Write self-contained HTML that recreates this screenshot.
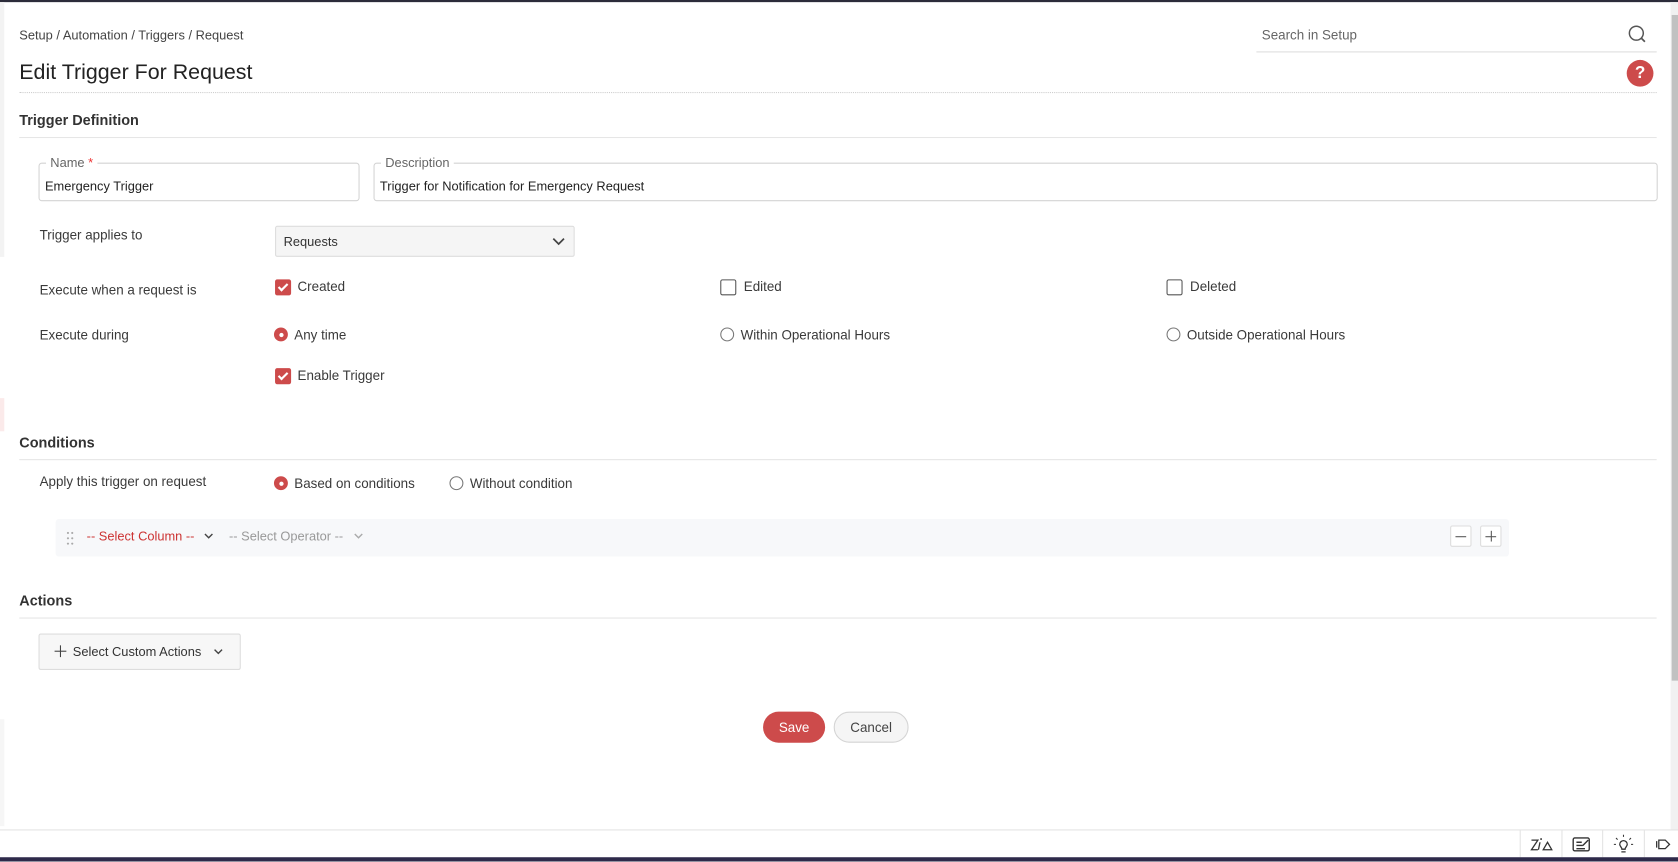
<!DOCTYPE html>
<html><head><meta charset="utf-8"><style>
html,body{margin:0;padding:0;width:1678px;height:861px;overflow:hidden;background:#fff;}
#w{position:absolute;left:0;top:0;width:1568px;height:805px;transform:scale(1.0702);transform-origin:0 0;font-family:"Liberation Sans",sans-serif;color:#3a3a3a;font-size:12.5px;}
.a{position:absolute;white-space:nowrap;}
.cb{position:absolute;width:13px;height:13px;border:1px solid #555;border-radius:2px;background:#fff;}
.cb.on{background:#cd4b4b;border-color:#cd4b4b;}
.cb.on:after{content:"";position:absolute;left:4px;top:1px;width:3px;height:7px;border:solid #fff;border-width:0 2px 2px 0;transform:rotate(45deg);}
.rd{position:absolute;width:11px;height:11px;border:1px solid #777;border-radius:50%;background:#fff;}
.rd.on{background:#cd4b4b;border-color:#cd4b4b;}
.rd.on:after{content:"";position:absolute;left:3.5px;top:3.5px;width:4px;height:4px;background:#fff;border-radius:50%;}
.hl{position:absolute;left:18px;width:1530px;height:1px;background:#e6e6e6;}
.fs{position:absolute;border:1px solid #d4d4d4;border-radius:3px;}
.lg{position:absolute;top:-8px;background:#fff;padding:0 4px;color:#666;font-size:12px;}
.sec{position:absolute;left:18px;font-weight:bold;font-size:13.5px;color:#333;}
</style></head><body><div id="w">
<div class="a" style="left:0;top:0;width:1568px;height:2px;background:#2c2c3a"></div>
<div class="a" style="left:0;top:2px;width:4px;height:238px;background:#f3f3f3"></div>
<div class="a" style="left:0;top:372px;width:4px;height:31px;background:#fbeaea"></div>
<div class="a" style="left:0;top:672px;width:4px;height:100px;background:#f6f6f6"></div>
<div class="a" style="left:1561px;top:2px;width:7px;height:774px;background:#f1f1f1"></div>
<div class="a" style="left:1562px;top:14px;width:6px;height:622px;background:#c1c1c1"></div>

<div class="a" style="left:18px;top:26px;font-size:12px;color:#444">Setup / Automation / Triggers / Request</div>
<div class="a" style="left:1179px;top:26px;font-size:12.5px;color:#666">Search in Setup</div>
<div class="a" style="left:1174px;top:48px;width:374px;height:1px;background:#ddd"></div>
<svg class="a" style="left:1520px;top:22px" width="20" height="20" viewBox="0 0 20 20"><circle cx="9" cy="9" r="6.5" fill="none" stroke="#555" stroke-width="1.4"/><path d="M13.5 13.5L17 17" stroke="#555" stroke-width="1.6"/></svg>
<div class="a" style="left:18px;top:57px;font-size:20px;color:#222">Edit Trigger For Request</div>
<div class="a" style="left:1520px;top:56px;width:25px;height:25px;border-radius:50%;background:#cd4b4b;color:#fff;font-weight:bold;font-size:16px;text-align:center;line-height:25px">?</div>
<div class="a" style="left:18px;top:86px;width:1530px;border-top:1px dotted #ccc"></div>

<div class="sec" style="top:105px">Trigger Definition</div>
<div class="hl" style="top:128px"></div>
<div class="fs" style="left:36px;top:152px;width:298px;height:34px"><span class="lg" style="left:6px">Name<span style="color:#e33"> *</span></span><span class="a" style="left:5px;top:14px;font-size:12px;color:#222">Emergency Trigger</span></div>
<div class="fs" style="left:349px;top:152px;width:1198px;height:34px"><span class="lg" style="left:6px">Description</span><span class="a" style="left:5px;top:14px;font-size:12px;color:#222">Trigger for Notification for Emergency Request</span></div>

<div class="a" style="left:37px;top:213px">Trigger applies to</div>
<div class="a" style="left:257px;top:211px;width:278px;height:27px;background:#f5f5f5;border:1px solid #ddd;border-radius:2px"><span class="a" style="left:7px;top:7px;font-size:12px;color:#333">Requests</span><svg class="a" style="left:258px;top:9px" width="12" height="10"><path d="M1 2l5 5 5-5" fill="none" stroke="#444" stroke-width="1.6"/></svg></div>

<div class="a" style="left:37px;top:264px">Execute when a request is</div>
<div class="cb on" style="left:257px;top:261px"></div><div class="a" style="left:278px;top:261px">Created</div>
<div class="cb" style="left:673px;top:261px"></div><div class="a" style="left:695px;top:261px">Edited</div>
<div class="cb" style="left:1090px;top:261px"></div><div class="a" style="left:1112px;top:261px">Deleted</div>

<div class="a" style="left:37px;top:306px">Execute during</div>
<div class="rd on" style="left:256px;top:306px"></div><div class="a" style="left:275px;top:306px">Any time</div>
<div class="rd" style="left:673px;top:306px"></div><div class="a" style="left:692px;top:306px">Within Operational Hours</div>
<div class="rd" style="left:1090px;top:306px"></div><div class="a" style="left:1109px;top:306px">Outside Operational Hours</div>
<div class="cb on" style="left:257px;top:344px"></div><div class="a" style="left:278px;top:344px">Enable Trigger</div>

<div class="sec" style="top:406px">Conditions</div>
<div class="hl" style="top:429px"></div>
<div class="a" style="left:37px;top:443px">Apply this trigger on request</div>
<div class="rd on" style="left:256px;top:445px"></div><div class="a" style="left:275px;top:445px">Based on conditions</div>
<div class="rd" style="left:420px;top:445px"></div><div class="a" style="left:439px;top:445px">Without condition</div>

<div class="a" style="left:52px;top:485px;width:1358px;height:35px;background:#f7f8fa;border-radius:3px">
<svg class="a" style="left:10px;top:11px" width="8" height="14"><g fill="#aaa"><circle cx="1.5" cy="2" r="1"/><circle cx="5.5" cy="2" r="1"/><circle cx="1.5" cy="7" r="1"/><circle cx="5.5" cy="7" r="1"/><circle cx="1.5" cy="12" r="1"/><circle cx="5.5" cy="12" r="1"/></g></svg>
<span class="a" style="left:29px;top:9px;font-size:12px;color:#c33">-- Select Column --</span>
<svg class="a" style="left:138px;top:12px" width="10" height="8"><path d="M1.5 2l3.5 3.5 3.5-3.5" fill="none" stroke="#444" stroke-width="1.3"/></svg>
<span class="a" style="left:162px;top:9px;font-size:12px;color:#999">-- Select Operator --</span>
<svg class="a" style="left:278px;top:12px" width="10" height="8"><path d="M1.5 2l3.5 3.5 3.5-3.5" fill="none" stroke="#aaa" stroke-width="1.3"/></svg>
<div class="a" style="left:1303px;top:6px;width:18px;height:18px;border:1px solid #ddd;border-radius:2px;background:#fff"><div class="a" style="left:4px;top:9px;width:10px;height:1px;background:#555"></div></div>
<div class="a" style="left:1331px;top:6px;width:18px;height:18px;border:1px solid #ddd;border-radius:2px;background:#fff"><div class="a" style="left:4px;top:9px;width:10px;height:1px;background:#555"></div><div class="a" style="left:9px;top:4px;width:1px;height:10px;background:#555"></div></div>
</div>

<div class="sec" style="top:554px">Actions</div>
<div class="hl" style="top:577px"></div>
<div class="a" style="left:36px;top:592px;width:187px;height:32px;background:#f7f7f7;border:1px solid #ddd;border-radius:2px">
<div class="a" style="left:14px;top:15px;width:11px;height:1px;background:#444"></div><div class="a" style="left:19px;top:10px;width:1px;height:11px;background:#444"></div>
<span class="a" style="left:31px;top:9px;font-size:12px;color:#333">Select Custom Actions</span>
<svg class="a" style="left:162px;top:12px" width="10" height="8"><path d="M1.5 2l3.5 3.5 3.5-3.5" fill="none" stroke="#444" stroke-width="1.3"/></svg>
</div>

<div class="a" style="left:713px;top:665px;width:58px;height:29px;background:#cd4b4b;border-radius:15px;color:#fff;text-align:center;line-height:30px;font-size:12.5px">Save</div>
<div class="a" style="left:779px;top:665px;width:68px;height:27px;background:#f5f5f5;border:1px solid #d4d4d4;border-radius:15px;color:#444;text-align:center;line-height:28px;font-size:12.5px">Cancel</div>

<div class="a" style="left:0;top:775px;width:1568px;height:1px;background:#e3e3e3"></div>
<div class="a" style="left:1420px;top:776px;width:1px;height:25px;background:#e3e3e3"></div>
<div class="a" style="left:1459px;top:776px;width:1px;height:25px;background:#e3e3e3"></div>
<div class="a" style="left:1497px;top:776px;width:1px;height:25px;background:#e3e3e3"></div>
<div class="a" style="left:1536px;top:776px;width:1px;height:25px;background:#e3e3e3"></div>
<svg class="a" style="left:1429px;top:780px" width="22" height="18"><path d="M2 5h6L2 14h6" fill="none" stroke="#333" stroke-width="1.2"/><circle cx="11" cy="4" r="0.9" fill="#333"/><path d="M10 7l-1.5 7M13 14l4-7 4 7z" fill="none" stroke="#333" stroke-width="1.2"/></svg>
<svg class="a" style="left:1468px;top:780px" width="20" height="18"><rect x="2" y="3" width="15" height="12" rx="1.5" fill="none" stroke="#333" stroke-width="1.3"/><path d="M5 7h5M5 10h6M5 13h8M11 10l5-5" stroke="#333" stroke-width="1.3" fill="none"/></svg>
<svg class="a" style="left:1507px;top:779px" width="20" height="20"><path d="M10 1v2M3 4l1.5 1.5M17 4l-1.5 1.5M1 10h2M17 10h2" stroke="#333" stroke-width="1"/><path d="M6.5 10a3.5 3.5 0 1 1 7 0c0 2-2 2.5-2 4.5h-3c0-2-2-2.5-2-4.5zM8 17h4" fill="none" stroke="#333" stroke-width="1.2"/></svg>
<svg class="a" style="left:1544px;top:780px" width="20" height="18"><path d="M4 6v6M6 5l6 0 4 4-4 4-6 0z" fill="none" stroke="#333" stroke-width="1.2"/></svg>
<div class="a" style="left:0;top:801px;width:1568px;height:4px;background:#2e2a4a"></div>
</div></body></html>
